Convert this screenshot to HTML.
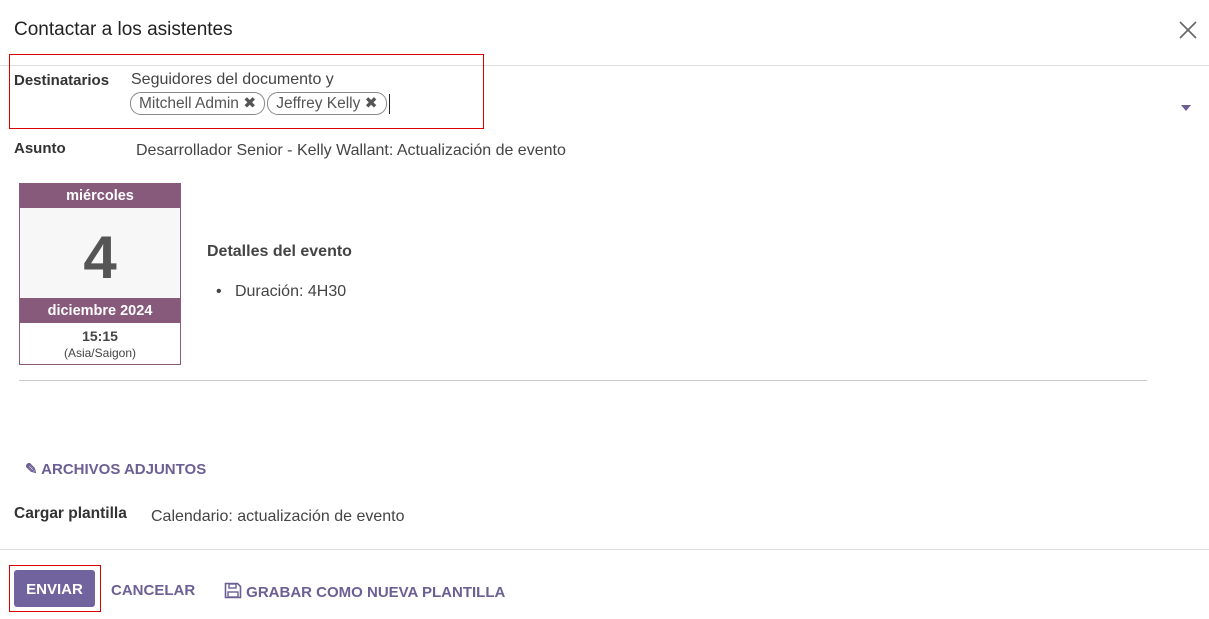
<!DOCTYPE html>
<html><head><meta charset="utf-8"><style>
*{box-sizing:border-box}
body{margin:0;width:1209px;height:619px;background:#fff;font-family:"Liberation Sans",sans-serif;color:#444;font-size:16px;position:relative;overflow:hidden}
.a{position:absolute;white-space:nowrap}
.b{font-weight:bold;color:#333;font-size:15px}
.tag{display:inline-block;border:1px solid #888;border-radius:11px;padding:1px 8px;height:23px;line-height:19px;color:#555;font-size:15.5px;margin-right:2px}
.lk{color:#6b5f93;font-weight:bold;font-size:15px}
</style></head><body>
<div class="a" style="left:14px;top:19px;font-size:19px;color:#222">Contactar a los asistentes</div>
<svg class="a" style="left:1179px;top:21px" width="18" height="18" viewBox="0 0 18 18"><path d="M1 1L17 17M17 1L1 17" stroke="#666" stroke-width="1.6"/></svg>
<div class="a" style="left:0;top:65px;width:1209px;border-top:1px solid #ddd"></div>
<div class="a" style="left:9px;top:54px;width:475px;height:75px;border:1px solid #d00"></div>
<div class="a b" style="left:14px;top:72px">Destinatarios</div>
<div class="a" style="left:131px;top:71px">Seguidores del documento y</div>
<div class="a" style="left:130px;top:92px"><span class="tag">Mitchell Admin ✖</span><span class="tag">Jeffrey Kelly ✖</span><span style="display:inline-block;width:1px;height:20px;background:#222;vertical-align:middle"></span></div>
<div class="a" style="left:1181px;top:105px;width:0;height:0;border-left:5px solid transparent;border-right:5px solid transparent;border-top:6px solid #6b5f93"></div>
<div class="a b" style="left:14px;top:140px">Asunto</div>
<div class="a" style="left:136px;top:142px">Desarrollador Senior - Kelly Wallant: Actualización de evento</div>
<div class="a" style="left:19px;top:183px;width:162px;height:182px;border:1px solid #8b5a7b;text-align:center">
<div style="background:#875a7b;color:#fff;font-weight:bold;height:24px;line-height:25px;font-size:14.5px">miércoles</div>
<div style="background:#f7f7f7;height:90px;line-height:100px;font-size:60px;font-weight:bold;color:#555">4</div>
<div style="background:#875a7b;color:#fff;font-weight:bold;height:25px;line-height:26px;font-size:14.5px">diciembre 2024</div>
<div style="font-weight:bold;font-size:14px;margin-top:5px;color:#444">15:15</div>
<div style="font-size:12px;margin-top:2px">(Asia/Saigon)</div>
</div>
<div class="a b" style="left:207px;top:243px;color:#444;font-size:16px">Detalles del evento</div>
<div class="a" style="left:216px;top:283px">•&nbsp;&nbsp;&nbsp;Duración: 4H30</div>
<div class="a" style="left:19px;top:380px;width:1128px;border-top:1px solid #ccc"></div>
<div class="a lk" style="left:25px;top:460px">✎ ARCHIVOS ADJUNTOS</div>
<div class="a b" style="left:14px;top:505px;font-size:15.5px">Cargar plantilla</div>
<div class="a" style="left:151px;top:508px">Calendario: actualización de evento</div>
<div class="a" style="left:0;top:549px;width:1209px;border-top:1px solid #ddd"></div>
<div class="a" style="left:9px;top:565px;width:92px;height:47px;border:1px solid #d00"></div>
<div class="a" style="left:14px;top:570px;width:81px;height:37px;background:#71639e;border-radius:3px;color:#fff;font-weight:bold;text-align:center;line-height:39px;font-size:15px">ENVIAR</div>
<div class="a lk" style="left:111px;top:582px">CANCELAR</div>
<div class="a lk" style="left:224px;top:582px"><svg width="18" height="17" viewBox="0 0 18 17" style="vertical-align:-2px"><path d="M1.5 1.5h12l3 3v11h-15z" fill="none" stroke="#6b5f93" stroke-width="1.6"/><rect x="5" y="2" width="7" height="4" fill="none" stroke="#6b5f93" stroke-width="1.4"/><rect x="4" y="10" width="10" height="5" fill="none" stroke="#6b5f93" stroke-width="1.4"/></svg> GRABAR COMO NUEVA PLANTILLA</div>
</body></html>
